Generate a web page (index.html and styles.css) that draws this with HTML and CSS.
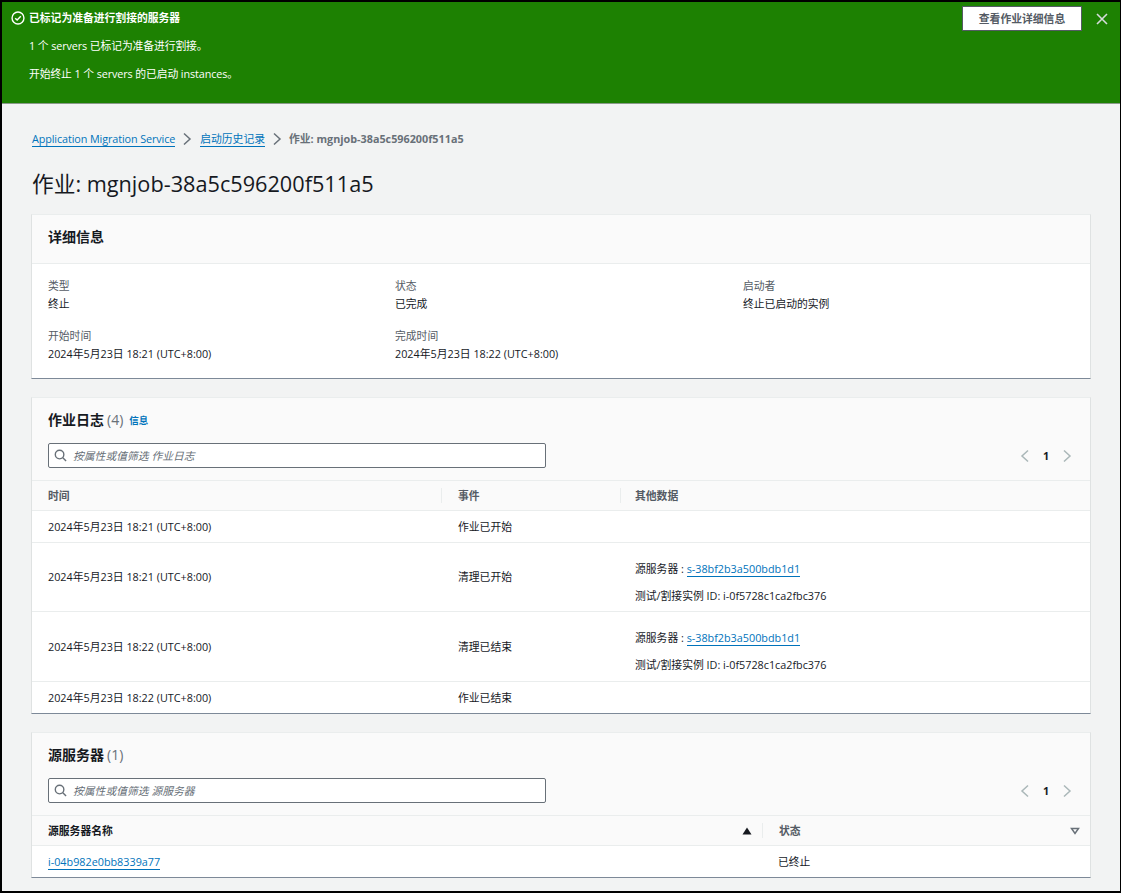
FILE: index.html
```html
<!DOCTYPE html>
<html lang="zh">
<head>
<meta charset="utf-8">
<title>作业: mgnjob-38a5c596200f511a5</title>
<link rel="stylesheet" href="styles.css">
</head>
<body>
<div class="frame">
  <section class="flash">
    <svg class="flash-icon" width="14" height="14" viewBox="0 0 16 16"><circle cx="8" cy="8" r="6.8"/><path d="M4.8 8.2l2.2 2.2 4.2-4.4"/></svg>
    <div class="flash-body">
      <div class="flash-title">已标记为准备进行割接的服务器</div>
      <p>1 个 servers 已标记为准备进行割接。</p>
      <p>开始终止 1 个 servers 的已启动 instances。</p>
    </div>
    <button class="flash-btn">查看作业详细信息</button>
    <svg class="flash-close" width="14" height="14" viewBox="0 0 14 14"><path d="M2 2l10 10M12 2L2 12"/></svg>
  </section>
  <main class="page">
    <nav class="crumbs">
      <a class="crumb-first" href="#">Application Migration Service</a>
      <svg class="crumb-sep" width="10" height="14" viewBox="0 0 10 14"><path d="M2 1.5l6 5.5-6 5.5"/></svg>
      <a class="crumb-second" href="#">启动历史记录</a>
      <svg class="crumb-sep" width="10" height="14" viewBox="0 0 10 14"><path d="M2 1.5l6 5.5-6 5.5"/></svg>
      <span class="crumb-current">作业: mgnjob-38a5c596200f511a5</span>
    </nav>
    <h1>作业: mgnjob-38a5c596200f511a5</h1>

    <section class="card details">
      <header class="details-head"><h2>详细信息</h2></header>
      <div class="details-grid">
        <div class="kv"><label>类型</label><div>终止</div></div>
        <div class="kv"><label>状态</label><div>已完成</div></div>
        <div class="kv"><label>启动者</label><div>终止已启动的实例</div></div>
        <div class="kv"><label>开始时间</label><div>2024年5月23日 18:21 (UTC+8:00)</div></div>
        <div class="kv"><label>完成时间</label><div>2024年5月23日 18:22 (UTC+8:00)</div></div>
      </div>
    </section>

    <section class="card">
      <header class="table-head">
        <h2>作业日志 <span class="count">(4)</span> <a class="info" href="#">信息</a></h2>
        <div class="tools">
          <div class="filter">
            <svg width="13" height="13" viewBox="0 0 14 14"><circle cx="6" cy="6" r="4.6"/><path d="M9.5 9.5L13 13"/></svg>
            <span>按属性或值筛选 作业日志</span>
          </div>
          <div class="pager">
            <svg width="10" height="14" viewBox="0 0 10 14"><path d="M8 1.5L2 7l6 5.5"/></svg>
            <b>1</b>
            <svg width="10" height="14" viewBox="0 0 10 14"><path d="M2 1.5L8 7l-6 5.5"/></svg>
          </div>
        </div>
      </header>
      <div class="log-row log-header">
        <div class="cell">时间</div>
        <div class="cell">事件</div>
        <div class="cell">其他数据</div>
      </div>
      <div class="log-row small">
        <div class="cell">2024年5月23日 18:21 (UTC+8:00)</div>
        <div class="cell">作业已开始</div>
        <div class="cell"></div>
      </div>
      <div class="log-row tall">
        <div class="cell">2024年5月23日 18:21 (UTC+8:00)</div>
        <div class="cell">清理已开始</div>
        <div class="cell stack">
          <div>源服务器 : <a href="#">s-38bf2b3a500bdb1d1</a></div>
          <div>测试/割接实例 ID: i-0f5728c1ca2fbc376</div>
        </div>
      </div>
      <div class="log-row tall">
        <div class="cell">2024年5月23日 18:22 (UTC+8:00)</div>
        <div class="cell">清理已结束</div>
        <div class="cell stack">
          <div>源服务器 : <a href="#">s-38bf2b3a500bdb1d1</a></div>
          <div>测试/割接实例 ID: i-0f5728c1ca2fbc376</div>
        </div>
      </div>
      <div class="log-row small last">
        <div class="cell">2024年5月23日 18:22 (UTC+8:00)</div>
        <div class="cell">作业已结束</div>
        <div class="cell"></div>
      </div>
    </section>

    <section class="card">
      <header class="table-head">
        <h2>源服务器 <span class="count">(1)</span></h2>
        <div class="tools">
          <div class="filter">
            <svg width="13" height="13" viewBox="0 0 14 14"><circle cx="6" cy="6" r="4.6"/><path d="M9.5 9.5L13 13"/></svg>
            <span>按属性或值筛选 源服务器</span>
          </div>
          <div class="pager">
            <svg width="10" height="14" viewBox="0 0 10 14"><path d="M8 1.5L2 7l6 5.5"/></svg>
            <b>1</b>
            <svg width="10" height="14" viewBox="0 0 10 14"><path d="M2 1.5L8 7l-6 5.5"/></svg>
          </div>
        </div>
      </header>
      <div class="src-row src-header">
        <div class="cell sorted">源服务器名称<svg width="10" height="8" viewBox="0 0 10 8"><path d="M5 .5L9.5 7.5H.5z"/></svg></div>
        <div class="cell unsorted">状态<svg width="10" height="8" viewBox="0 0 10 8"><path d="M1.5 1.5h7L5 6.5z"/></svg></div>
      </div>
      <div class="src-row src-last">
        <div class="cell"><a href="#">i-04b982e0bb8339a77</a></div>
        <div class="cell">已终止</div>
      </div>
    </section>
  </main>
</div>
</body>
</html>
```
FILE: styles.css
```css
* { box-sizing: border-box; }
html, body { margin: 0; height: 100%; overflow: hidden; }
body {
  background: #000;
  font-family: "Open Sans", "Noto Sans CJK SC", sans-serif;
  font-size: 10.8px;
  line-height: 16px;
  color: #16191f;
}
a { color: #0073bb; text-decoration: none; border-bottom: 1px solid #0073bb; }
.frame {
  margin: 2px 1px 0 2px;
  height: 889px;
  background: #f2f3f3;
  overflow: hidden;
}
.flash {
  display: flex;
  align-items: flex-start;
  height: 102px;
  background: #1d8102;
  border-bottom: 1px solid #8a9a8a;
  color: #fff;
  padding: 8px 11px 0 9px;
}
.flash-icon { margin: 1px 4px 0 0; flex: none; fill: none; stroke: #fff; stroke-width: 1.6; }
.flash-body { flex: 1; }
.flash-title { font-weight: 700; }
.flash p { margin: 12px 0 0; letter-spacing: -0.1px; }
.flash-btn {
  width: 120px;
  height: 25px;
  margin: -4px 13px 0 0;
  background: #fff;
  border: 1px solid #545b64;
  color: #545b64;
  font: 700 10.8px/16px "Open Sans", "Noto Sans CJK SC", sans-serif;
  padding: 0;
}
.flash-close { margin: 2px 0 0; fill: none; stroke: #d5dbdb; stroke-width: 1.6; flex: none; }
.page { padding: 27px 29px 0 30px; }
.crumbs { display: flex; align-items: center; height: 16px; gap: 7px; }
.crumb-sep { fill: none; stroke: #687078; stroke-width: 1.5; flex: none; }
.crumbs a { line-height: 15px; }
.crumb-first { letter-spacing: -0.1px; }
.crumb-second { margin-left: 1px; }
.crumb-current { color: #687078; font-weight: 700; }
h1 { margin: 22px 0 0; font-size: 21.7px; line-height: 30px; font-weight: 400; }
h2 { margin: 0; height: 18px; font-size: 14px; line-height: 18px; font-weight: 700; display: flex; align-items: center; gap: 3px; }
.card {
  background: #fff;
  border: 1px solid #dfe2e2;
  border-bottom: 1px solid #7d8998;
  border-top: 1px solid #eaeded;
  margin: 0 0 18px -1px;
}
h1 + .card { margin-top: 15px; }
.details-head { height: 49px; background: #fafafa; border-bottom: 1px solid #eaeded; padding: 13px 16px; }
.details-grid {
  display: grid;
  grid-template-columns: 347px 348px 1fr;
  align-content: start;
  row-gap: 16px;
  padding: 14px 15px 0 16px;
  height: 114px;
}
.kv label { display: block; color: #545b64; line-height: 16px; margin-bottom: 2px; }
.kv div { line-height: 16px; }
.table-head { background: #fafafa; padding: 13px 16px 0; height: 83px; border-bottom: 1px solid #eaeded; }
.count { color: #687078; font-weight: 400; }
.info { font-size: 9.5px; font-weight: 700; border: 0; margin: 2px 0 0 3px; }
.tools { display: flex; justify-content: space-between; align-items: center; margin-top: 14px; }
.filter {
  width: 498px;
  height: 25px;
  background: #fff;
  border: 1px solid #687078;
  border-radius: 2px;
  display: flex;
  align-items: center;
  gap: 6px;
  padding-left: 5px;
  color: #687078;
  font-style: italic;
}
.filter svg { fill: none; stroke: #687078; stroke-width: 1.5; flex: none; }
.pager { display: flex; align-items: center; width: 52px; justify-content: space-between; margin-right: 2px; }
.pager svg { fill: none; stroke: #aab7b8; stroke-width: 1.5; }
.log-row {
  display: grid;
  grid-template-columns: 409px 179px 1fr;
  align-items: center;
  border-bottom: 1px solid #eaeded;
}
.log-row .cell { padding-left: 16px; }
.log-row .cell:nth-child(2) { padding-left: 17px; }
.log-row .cell:nth-child(3) { padding-left: 15px; }
.log-header { height: 30px; background: #fafafa; color: #545b64; font-weight: 700; }
.log-header .cell { border-left: 1px solid #eaeded; height: 15px; line-height: 15px; }
.log-header .cell:first-child { border-left: 0; }
.log-header .cell:nth-child(2) { padding-left: 16px; }
.log-header .cell:nth-child(3) { padding-left: 14px; }
.small { height: 32px; }
.tall { height: 69px; }
.tall + .tall { height: 70px; }
.last { border-bottom: 0; height: 31px; }
.log-row .stack { display: flex; flex-direction: column; gap: 11px; padding-top: 10px; }
.stack a { line-height: 15px; }
.src-row { display: grid; grid-template-columns: 730px 1fr; align-items: center; border-bottom: 1px solid #eaeded; }
.src-row .cell { padding-left: 16px; }
.src-header { height: 30px; background: #fafafa; font-weight: 700; }
.src-header .cell { display: flex; align-items: center; justify-content: space-between; height: 15px; padding-right: 10px; }
.src-header .cell:nth-child(2) { border-left: 1px solid #eaeded; color: #545b64; }
.src-last { height: 31px; border-bottom: 0; }
.sorted svg { fill: #16191f; }
.unsorted svg { fill: none; stroke: #687078; stroke-width: 1.5; }
```
